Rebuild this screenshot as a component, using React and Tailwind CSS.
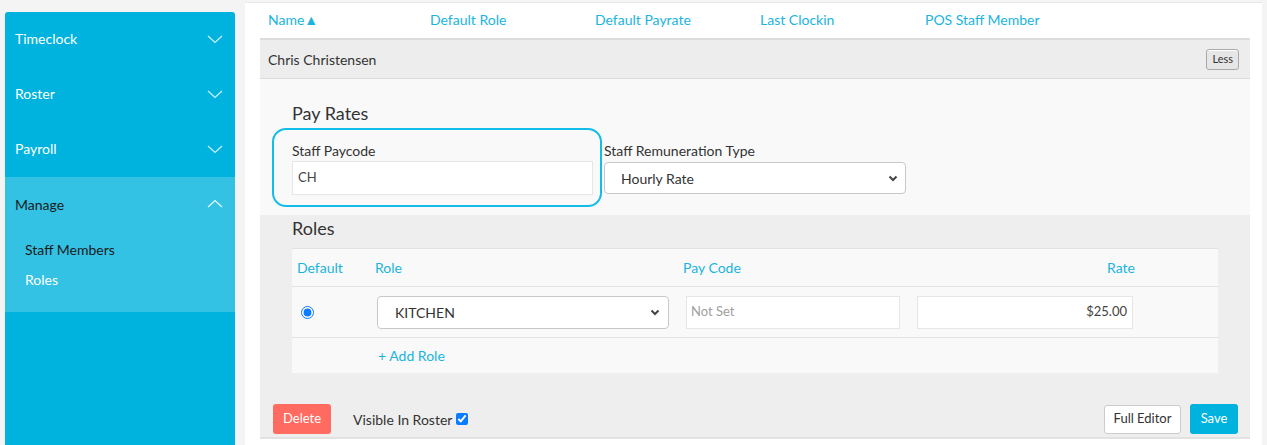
import React from "react";

const font = { fontFamily: "Lato, 'Open Sans', 'Liberation Sans', sans-serif" };

function Chevron({ up, className = "" }) {
  return (
    <svg width="16" height="9" viewBox="0 0 16 9" className={className} fill="none" stroke="currentColor" strokeWidth="1.2">
      {up ? <path d="M1 8 L8 1.5 L15 8" /> : <path d="M1 1 L8 7.5 L15 1" />}
    </svg>
  );
}

function SmallChevron() {
  return (
    <svg width="10" height="7" viewBox="0 0 10 7" fill="none" stroke="#444" strokeWidth="2">
      <path d="M1.5 1.5 L5 5 L8.5 1.5" />
    </svg>
  );
}

function SideItem({ label }) {
  return (
    <div className="h-[55px] flex items-center justify-between pl-[10px] pr-[12px] text-white text-[14px]">
      <span className="-mt-[3px]">{label}</span>
      <Chevron className="text-white/80" />
    </div>
  );
}

export default function App() {
  return (
    <div style={font} className="flex w-full h-[445px] bg-[#f4f4f4] overflow-hidden text-[#333]">
      {/* Sidebar */}
      <div className="ml-[5px] mt-[12px] w-[230px] shrink-0 bg-[#00b3de] rounded-t-[3px] flex flex-col">
        <SideItem label="Timeclock" />
        <SideItem label="Roster" />
        <SideItem label="Payroll" />
        <div className="bg-[#33c1e4] pb-[18px]">
          <div className="h-[55px] flex items-center justify-between pl-[10px] pr-[12px] text-[14px] text-[#1c1c1c]">
            <span>Manage</span>
            <Chevron up className="text-white/90 -mt-[2px]" />
          </div>
          <div className="h-[30px] flex items-center pl-[20px] text-[14px] text-[#1c1c1c] mt-[2px]">Staff Members</div>
          <div className="h-[30px] flex items-center pl-[20px] text-[14px] text-white">Roles</div>
        </div>
      </div>

      {/* Main */}
      <div className="ml-[10px] mt-[2px] w-[1017px] shrink-0 bg-white border-t border-[#e8e8e8] pl-[15px] pr-[12px]">
        {/* header */}
        <div className="h-[35px] flex items-center pl-[8px] pb-[2px] text-[14px] text-[#1ab4de]">
          <span className="w-[162px] flex items-center">Name<span className="text-[14px] leading-none">▲</span></span>
          <span className="w-[165px]">Default Role</span>
          <span className="w-[165px]">Default Payrate</span>
          <span className="w-[165px]">Last Clockin</span>
          <span>POS Staff Member</span>
        </div>

        {/* name row */}
        <div className="h-[41px] bg-[#ededed] border-t-[2px] border-[#dcdcdc] border-b border-b-[#dcdcdc] flex items-center justify-between pl-[8px] pr-[11px]">
          <span className="text-[14px] text-[#333]">Chris Christensen</span>
          <button className="h-[21px] px-[5px] text-[11px] text-[#333] bg-[#e6e6e6] border border-[#a9a9a9] rounded-[3px] shadow-[inset_0_1px_0_#fff]">Less</button>
        </div>

        {/* Pay rates */}
        <div className="bg-[#f9f9f9] pl-[32px] pt-[23px] pb-[20px]">
          <div className="text-[18px] text-[#333] leading-[22px]">Pay Rates</div>
          <div className="flex mt-[18px]">
            <div className="relative w-[301px]">
              <div className="absolute -left-[20px] -top-[14px] -right-[9px] -bottom-[12px] border-[2.5px] border-[#12bde9] rounded-[14px] pointer-events-none" />
              <div className="text-[14px] text-[#333] leading-[18px]">Staff Paycode</div>
              <div className="mt-[1px] h-[34px] bg-white border border-[#e6e6e6] flex items-center pl-[5px] text-[13px] text-[#444]">CH</div>
            </div>
            <div className="ml-[11px] w-[302px]">
              <div className="text-[14px] text-[#333] leading-[18px]">Staff Remuneration Type</div>
              <div className="mt-[2px] h-[32px] bg-white border border-[#c8c8c8] rounded-[4px] flex items-center justify-between pl-[16px] pr-[7px] text-[14px] text-[#333]">
                <span>Hourly Rate</span>
                <SmallChevron />
              </div>
            </div>
          </div>
        </div>

        {/* Roles */}
        <div className="bg-[#eeeeee] border-b-[2px] border-[#e2e2e2]">
          <div className="pl-[32px] pr-[32px]">
            <div className="text-[18px] text-[#333] leading-[22px] pt-[2px]">Roles</div>
            <div className="mt-[9px] bg-[#f9f9f9] border-t border-[#e2e2e2]">
              <div className="h-[37px] flex items-center text-[14px] text-[#1ab4de]">
                <span className="w-[83px] pl-[5px]">Default</span>
                <span className="w-[308px]">Role</span>
                <span className="flex-1">Pay Code</span>
                <span className="pr-[83px]">Rate</span>
              </div>
              <div className="h-[51px] border-t border-[#e2e2e2] flex items-center">
                <div className="w-[85px] pl-[9px] flex items-center">
                  <input type="radio" defaultChecked className="w-[13px] h-[13px] accent-[#0a7cff] m-0" />
                </div>
                <div className="w-[292px] h-[33px] bg-white border border-[#c8c8c8] rounded-[4px] flex items-center justify-between pl-[17px] pr-[8px] text-[14px] text-[#333]">
                  <span>KITCHEN</span>
                  <SmallChevron />
                </div>
                <div className="ml-[17px] w-[214px] h-[33px] bg-white border border-[#e6e6e6] flex items-center pl-[4px] text-[13px] text-[#a0a0a0]">Not Set</div>
                <div className="ml-[17px] w-[216px] h-[33px] bg-white border border-[#e6e6e6] flex items-center justify-end pr-[5px] text-[13px] text-[#444]">$25.00</div>
              </div>
              <div className="h-[36px] border-t border-[#e2e2e2] flex items-center pl-[86px] text-[14px] text-[#1ab4de]">
                + Add Role
              </div>
            </div>
          </div>
          <div className="flex items-center justify-between pl-[13px] pr-[12px] pt-[31px] pb-[3px]">
            <div className="flex items-center">
              <button className="w-[58px] h-[30px] bg-[#ff6b61] text-white text-[13px] rounded-[3px]">Delete</button>
              <span className="ml-[22px] text-[14px] text-[#333]">Visible In Roster</span>
              <input type="checkbox" defaultChecked className="ml-[4px] w-[12px] h-[12px] accent-[#0a7cff] m-0" />
            </div>
            <div className="flex items-center">
              <button className="w-[77px] h-[29px] bg-white border border-[#cccccc] rounded-[3px] text-[13px] text-[#333]">Full Editor</button>
              <button className="ml-[9px] w-[48px] h-[30px] bg-[#00b3de] rounded-[3px] text-[13px] text-white">Save</button>
            </div>
          </div>
        </div>
      </div>
    </div>
  );
}
